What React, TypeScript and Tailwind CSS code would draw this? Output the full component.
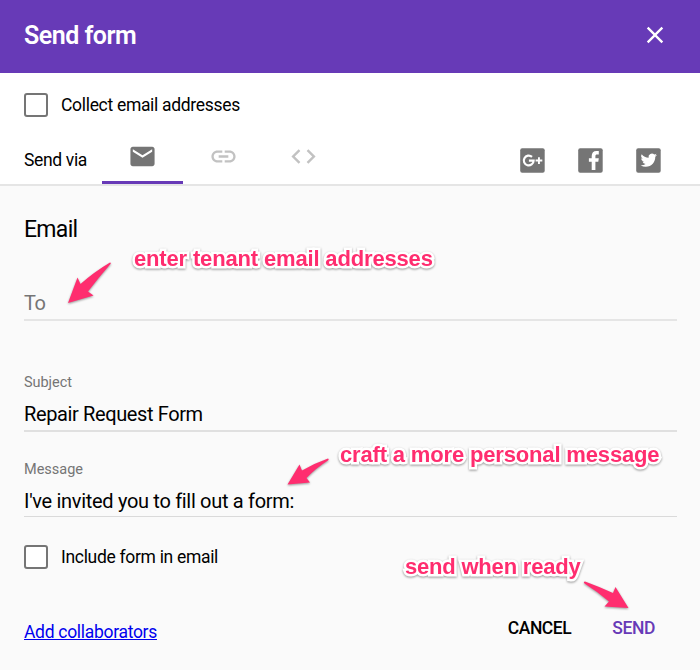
import type { ReactNode } from 'react';

function Icon({ path, className }: { path: string; className: string }) {
  return (
    <svg viewBox="0 0 24 24" className={className} fill="currentColor">
      <path d={path} />
    </svg>
  );
}

const MAIL = 'M20 4H4c-1.1 0-1.99.9-1.99 2L2 18c0 1.100.9 2 2 2h16c1.100 0 2-.9 2-2V6c0-1.100-.9-2-2-2zm0 4l-8 5-8-5V6l8 5 8-5v2z';
const LINK = 'M3.900 12c0-1.710 1.390-3.100 3.100-3.100h4V7H7c-2.760 0-5 2.240-5 5s2.240 5 5 5h4v-1.900H7c-1.710 0-3.100-1.390-3.100-3.100zM8 13h8v-2H8v2zm9-6h-4v1.900h4c1.710 0 3.100 1.390 3.100 3.100s-1.390 3.100-3.100 3.100h-4V17h4c2.760 0 5-2.240 5-5s-2.240-5-5-5z';
const CODE = 'M9.400 16.600L4.800 12l4.600-4.600L8 6l-6 6 6 6 1.400-1.400zm5.200 0l4.600-4.600-4.600-4.600L16 6l6 6-6 6-1.400-1.400z';
const CLOSE = 'M19 6.410L17.590 5 12 10.590 6.410 5 5 6.410 10.590 12 5 17.590 6.410 19 12 13.410 17.590 19 19 17.590 13.410 12z';

function Social({ label, children }: { label: string; children: ReactNode }) {
  return (
    <button aria-label={label} className="h-[25px] w-[25px]">
      <svg viewBox="0 0 25 25" className="block h-[25px] w-[25px]">
        <rect x="0.2" y="0.2" width="24.500" height="24.500" rx="2" fill="#757575" />
        {children}
      </svg>
    </button>
  );
}

function CheckRow({ label }: { label: string }) {
  return (
    <label className="flex items-center gap-[13px]">
      <span className="h-6 w-6 rounded-[3px] border-2 border-[#757575] bg-white" />
      <span className="text-[17.5px] leading-6 tracking-[-0.31px]">{label}</span>
    </label>
  );
}

function Note({ className, children }: { className: string; children: ReactNode }) {
  return (
    <span
      className={`absolute whitespace-nowrap font-['Liberation_Sans',Arial,sans-serif] text-[22px] leading-6 font-bold text-[#ff2d6f] [-webkit-text-stroke:5px_white] [paint-order:stroke_fill] drop-shadow-[0_1px_1px_rgba(0,0,0,0.4)] ${className}`}
    >
      {children}
    </span>
  );
}

export default function App() {
  return (
    <div className="relative flex h-[670px] w-[700px] flex-col overflow-hidden bg-[#fafafa] font-[Roboto,sans-serif] text-black">
      <header className="flex h-[73px] items-center justify-between bg-[#673ab7] pr-[31px] pb-1 pl-6 text-white">
        <h1 className="pt-[2px] text-[25px] leading-8 font-semibold tracking-[-0.5px]">Send form</h1>
        <button aria-label="Close">
          <Icon path={CLOSE} className="h-[28px] w-[28px]" />
        </button>
      </header>

      <section className="flex h-[113px] flex-col justify-between border-b-2 border-[#e5e5e5] bg-white pt-5">
        <div className="pl-6">
          <CheckRow label="Collect email addresses" />
        </div>
        <div className="flex h-[54px] pl-6">
          <span className="w-[78px] pt-[18px] text-[17.5px] leading-6 tracking-[-0.35px]">Send via</span>
          <div className="flex text-[#c2c2c2]">
            <button className="flex w-[81px] items-start justify-center border-b-3 border-[#673ab7] pt-[12px] text-[#757575]">
              <Icon path={MAIL} className="h-[29px] w-[29px]" />
            </button>
            <button className="flex w-[80px] items-start justify-center pt-[12px]">
              <Icon path={LINK} className="h-[29px] w-[29px]" />
            </button>
            <button className="flex w-[81px] items-start justify-center pt-[12px]">
              <Icon path={CODE} className="h-[29px] w-[29px]" />
            </button>
          </div>
          <div className="ml-auto flex gap-[33px] pt-[18px] pr-[39px]">
            <Social label="Google Plus">
              <g fill="none" stroke="white" strokeWidth="2.200">
                <path d="M12 8.900A4.900 4.900 0 1 0 13.600 12.700H8.900" />
              </g>
              <path d="M18 9.200v2.400H15.600v1.900H18v2.400h1.900v-2.400h2.400v-1.900h-2.400V9.200z" fill="white" />
            </Social>
            <Social label="Facebook">
              <path d="M13.700 22v-8.300H10.900v-3.500h2.800V7.900c0-3.100 1.800-5 4.700-5h2.400v3.500h-1.700c-1.300 0-1.700.5-1.700 1.700v2.100h3.400l-.5 3.500h-2.900V22z" fill="white" />
            </Social>
            <Social label="Twitter">
              <g transform="translate(4.600 4) scale(0.680)">
                <path d="M23.950 4.570a10 10 0 0 1-2.820.77 4.960 4.960 0 0 0 2.160-2.720c-.95.550-2 .95-3.130 1.180a4.920 4.920 0 0 0-8.380 4.480C7.690 8.100 4.070 6.130 1.640 3.160a4.920 4.920 0 0 0 1.520 6.570 4.900 4.900 0 0 1-2.230-.61v.06c0 2.390 1.700 4.380 3.950 4.830a5 5 0 0 1-2.210.08 4.940 4.940 0 0 0 4.600 3.420A9.870 9.870 0 0 1 0 19.540a13.990 13.990 0 0 0 7.550 2.210c9.050 0 14-7.500 14-13.980 0-.21 0-.42-.02-.63a9.940 9.940 0 0 0 2.460-2.550z" fill="white" />
              </g>
            </Social>
          </div>
        </div>
      </section>

      <main className="flex flex-1 flex-col pr-[23px] pl-6">
        <h2 className="mt-[29px] text-[23px] leading-[30px] tracking-[-0.7px]">Email</h2>
        <div className="mt-[32px] flex h-[44px] items-center border-b-2 border-[#e5e5e5] pb-[1px]">
          <span className="pt-[10px] text-[20px] leading-7 tracking-[-0.4px] text-[#757575]">To</span>
        </div>
        <label className="mt-[52px] text-[14.5px] leading-5 tracking-[-0.05px] text-[#757575]">Subject</label>
        <div className="mt-[9px] h-[30px] border-b-2 border-[#e0e0e0] text-[20px] leading-6 tracking-[-0.38px]">Repair Request Form</div>
        <label className="mt-[28px] text-[14.5px] leading-5 tracking-[0px] text-[#757575]">Message</label>
        <div className="h-[37px] border-b border-[#dadada] pt-[9px] text-[20px] leading-6 tracking-[-0.31px]">I've invited you to fill out a form:</div>
        <div className="mt-[28px]">
          <CheckRow label="Include form in email" />
        </div>
        <footer className="mt-[50px] flex items-start text-[17.5px] leading-6">
          <a className="mt-[1px] tracking-[-0.3px] text-[#0000ee] underline">Add collaborators</a>
          <button className="mt-[-3px] ml-auto font-medium tracking-[-0.45px]">CANCEL</button>
          <button className="mt-[-3px] mr-[22px] ml-[41px] font-medium tracking-[-0.4px] text-[#673ab7]">SEND</button>
        </footer>
      </main>

      <Note className="top-[247px] left-[134px] tracking-[-0.16px]">enter tenant email addresses</Note>
      <Note className="top-[443px] left-[340px] tracking-[-0.16px]">craft a more personal message</Note>
      <Note className="top-[555px] left-[405px] tracking-[-0.2px]">send when ready</Note>
      <svg
        viewBox="0 0 700 670"
        className="pointer-events-none absolute inset-0 h-[670px] w-[700px] drop-shadow-[0_1px_1px_rgba(0,0,0,0.4)]"
        fill="#ff2d6f"
      >
        <path d="M68 303L77.500 277.500L80.500 284Q94 272 110 262.500Q111.500 262.500 110.500 264Q99 277 88 291.500L93.500 295.500Z" />
        <path d="M287.500 484.500L299.500 464.500L302 470.500Q315 463 328 458.500Q329.500 459 328 460.500Q316 468 306.500 478L310 482.500Z" />
        <path d="M628.500 608L615.500 587L613 593Q600 587 585 581.500Q583 582 584.500 583.500Q598 592 609 601.500L604.500 606.500Z" />
      </svg>
    </div>
  );
}
